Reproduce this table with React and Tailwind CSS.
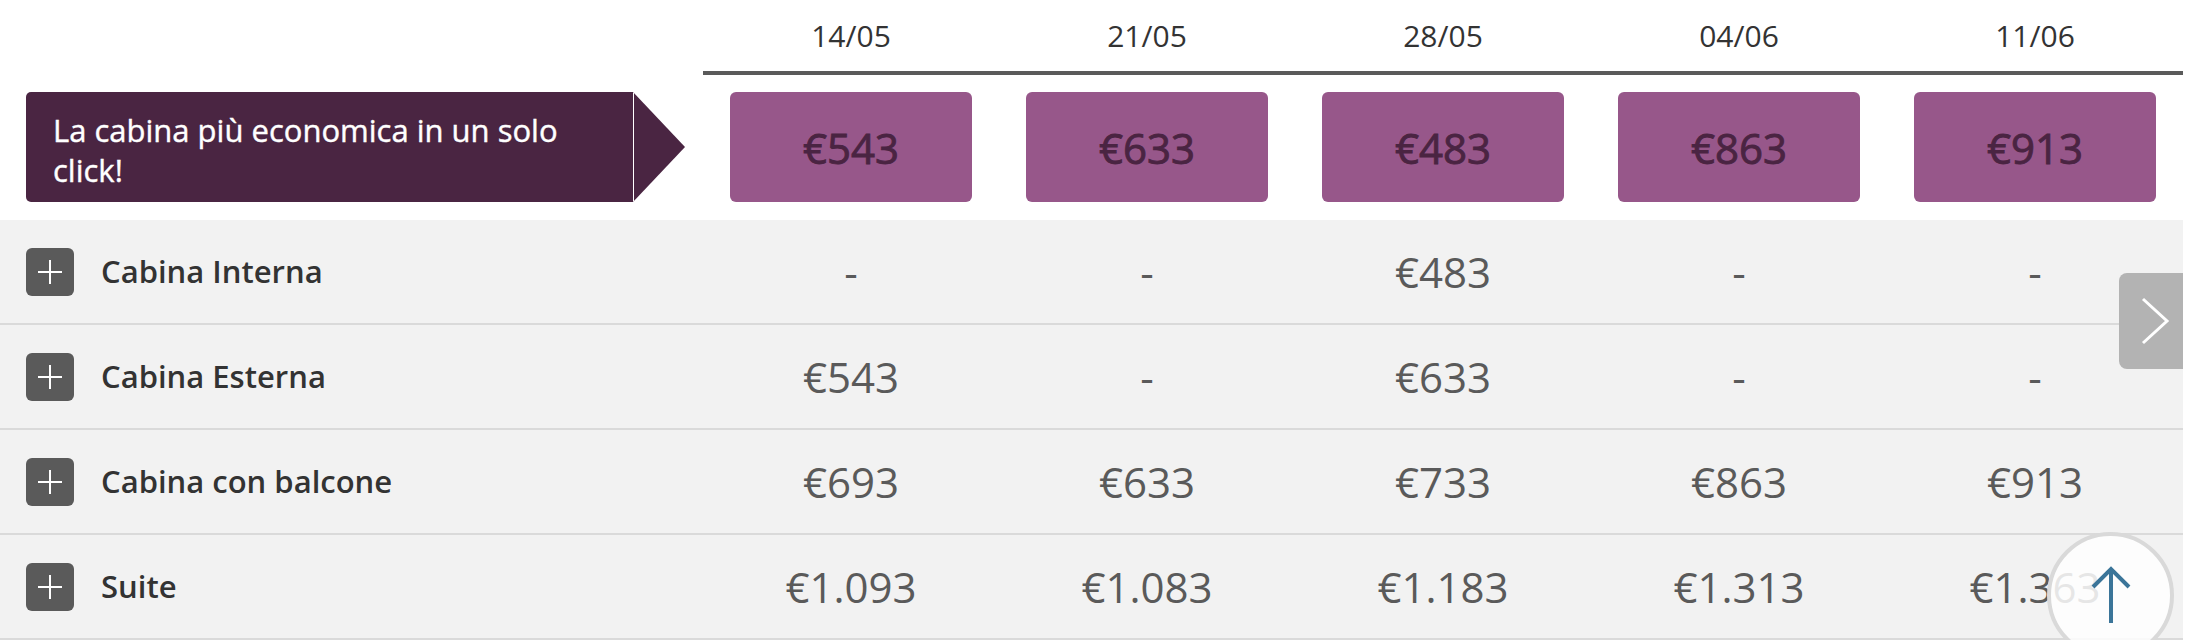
import React from "react";

const dates = ["14/05", "21/05", "28/05", "04/06", "11/06"];
const cheapest = ["€543", "€633", "€483", "€863", "€913"];

const rows = [
  { label: "Cabina Interna", prices: ["-", "-", "€483", "-", "-"] },
  { label: "Cabina Esterna", prices: ["€543", "-", "€633", "-", "-"] },
  { label: "Cabina con balcone", prices: ["€693", "€633", "€733", "€863", "€913"] },
  { label: "Suite", prices: ["€1.093", "€1.083", "€1.183", "€1.313", "€1.363"] },
];

function PlusIcon() {
  return (
    <div className="flex h-12 w-12 shrink-0 items-center justify-center rounded-[6px] bg-[#5a5a5a]">
      <svg width="48" height="48" viewBox="0 0 48 48">
        <path d="M12 24h24M24 12v24" stroke="#fff" strokeWidth="2" />
      </svg>
    </div>
  );
}

export default function App() {
  return (
    <div className="relative h-[640px] w-[2202px] overflow-hidden bg-white font-['Open_Sans',sans-serif]">
      {/* dates header */}
      <div className="flex h-[75px]">
        <div className="w-[703px] shrink-0" />
        <div className="grid w-[1480px] grid-cols-5 border-b-4 border-[#5a5a5a]">
          {dates.map((d) => (
            <div key={d} className="flex items-center justify-center text-[30px] text-[#333]">
              {d}
            </div>
          ))}
        </div>
      </div>

      {/* cheapest cabin row */}
      <div className="mt-[17px] flex h-[110px]">
        <div className="flex w-[703px] shrink-0 pl-[26px]">
          <div className="flex w-[607px] items-center rounded-l-[5px] bg-[#4a2542] pl-[27px] pr-[34px] pt-[5px] text-[31px] leading-[40px] text-white [-webkit-text-stroke:0.4px_#fff]">
            La cabina più economica in un solo click!
          </div>
          <div className="w-[52px] border-l border-white bg-[#4a2542] [clip-path:polygon(0_0,100%_50%,0_100%)]" />
        </div>
        <div className="grid w-[1480px] grid-cols-5">
          {cheapest.map((p, i) => (
            <div key={i} className="px-[27px]">
              <button className="flex h-full w-full items-center justify-center rounded-[6px] bg-[#97578a] text-[42px] text-[#4a2442] [-webkit-text-stroke:0.9px_#4a2442]">
                {p}
              </button>
            </div>
          ))}
        </div>
      </div>

      {/* cabin categories */}
      <div className="relative mt-[18px] w-[2183px] bg-[#f2f2f2]">
        {rows.map((r) => (
          <div key={r.label} className="flex h-[105px] border-b-2 border-[#dadada]">
            <div className="flex w-[703px] shrink-0 items-center gap-[27px] pl-[26px]">
              <PlusIcon />
              <span className="text-[31px] font-semibold text-[#333]">{r.label}</span>
            </div>
            <div className="grid w-[1480px] grid-cols-5">
              {r.prices.map((p, i) => (
                <div key={i} className="flex items-center justify-center text-[42px] text-[#5a5a5a]">
                  {p}
                </div>
              ))}
            </div>
          </div>
        ))}

        <button className="absolute right-0 top-[53px] flex h-24 w-16 items-center justify-center rounded-l-[8px] bg-[#b3b3b3]">
          <svg width="64" height="96" viewBox="0 0 64 96">
            <path d="M24 26l24 22-24 22" fill="none" stroke="#fff" strokeWidth="3" />
          </svg>
        </button>
      </div>

      {/* back to top */}
      <button className="absolute left-[2047px] top-[532px] h-[127px] w-[127px] rounded-full border-4 border-[#d9d9d9] bg-white/85">
        <svg className="absolute -left-1 -top-1" width="127" height="127" viewBox="0 0 127 127">
          <path d="M64 37v54M46 55l18-18 18 18" fill="none" stroke="#3b7599" strokeWidth="4" />
        </svg>
      </button>
    </div>
  );
}
